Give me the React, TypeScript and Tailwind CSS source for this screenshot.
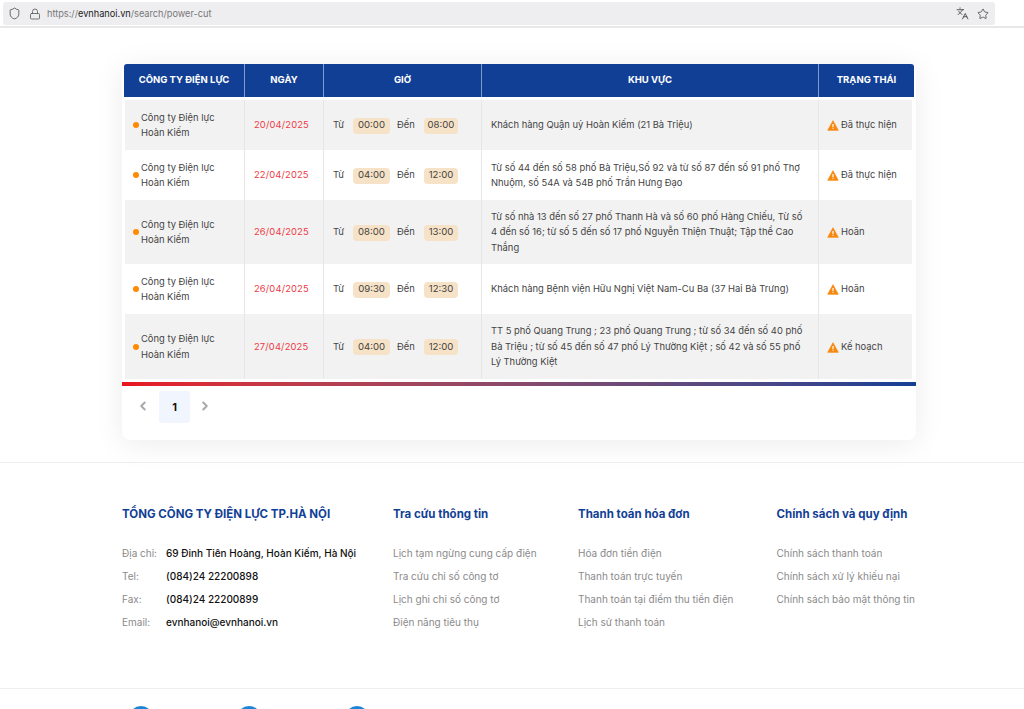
import { ChevronLeft, ChevronRight, Languages, Lock, Shield, Star } from "lucide-react";

const rows = [
  { h: "h-[50px]", date: "20/04/2025", from: "00:00", to: "08:00", area: ["Khách hàng Quận uỷ Hoàn Kiếm (21 Bà Triệu)"], status: "Đã thực hiện" },
  { h: "h-[50px]", date: "22/04/2025", from: "04:00", to: "12:00", area: ["Từ số 44 đến số 58 phố Bà Triệu,Số 92 và từ số 87 đến số 91 phố Thợ", "Nhuộm, số 54A và 54B phố Trần Hưng Đạo"], status: "Đã thực hiện" },
  { h: "h-[64px]", date: "26/04/2025", from: "08:00", to: "13:00", area: ["Từ số nhà 13 đến số 27 phố Thanh Hà và số 60 phố Hàng Chiếu, Từ số", "4 đến số 16; từ số 5 đến số 17 phố Nguyễn Thiện Thuật; Tập thể Cao", "Thắng"], status: "Hoãn" },
  { h: "h-[50px]", date: "26/04/2025", from: "09:30", to: "12:30", area: ["Khách hàng Bệnh viện Hữu Nghị Việt Nam-Cu Ba (37 Hai Bà Trưng)"], status: "Hoãn" },
  { h: "h-[65px]", date: "27/04/2025", from: "04:00", to: "12:00", area: ["TT 5 phố Quang Trung ; 23 phố Quang Trung ; từ số 34 đến số 40 phố", "Bà Triệu ; từ số 45 đến số 47 phố Lý Thường Kiệt ; số 42 và số 55 phố", "Lý Thường Kiệt"], status: "Kế hoạch" },
];

const contact = [
  ["Địa chỉ:", "69 Đinh Tiên Hoàng, Hoàn Kiếm, Hà Nội"],
  ["Tel:", "(084)24 22200898"],
  ["Fax:", "(084)24 22200899"],
  ["Email:", "evnhanoi@evnhanoi.vn"],
];

const columns = [
  { title: "Tra cứu thông tin", width: "w-[185px]", items: ["Lịch tạm ngừng cung cấp điện", "Tra cứu chỉ số công tơ", "Lịch ghi chỉ số công tơ", "Điện năng tiêu thụ"] },
  { title: "Thanh toán hóa đơn", width: "w-[198.5px]", items: ["Hóa đơn tiền điện", "Thanh toán trực tuyến", "Thanh toán tại điểm thu tiền điện", "Lịch sử thanh toán"] },
  { title: "Chính sách và quy định", width: "w-[140px]", items: ["Chính sách thanh toán", "Chính sách xử lý khiếu nại", "Chính sách bảo mật thông tin"] },
];

function Warn() {
  return (
    <svg viewBox="0 0 24 24" className="h-[11px] w-[12px] shrink-0">
      <path d="M12 1.5 23.5 22.5H.5Z" fill="#f7880f" stroke="#f7880f" strokeWidth="1.5" strokeLinejoin="round" />
      <path d="M12 8.5v7.5M12 17.8v2" stroke="#fff" strokeWidth="2.6" />
    </svg>
  );
}

export default function App() {
  return (
    <div className="h-[709px] w-[1024px] overflow-hidden bg-white [font-family:Inter,sans-serif] text-[9.4px] text-[#444]">
      <div className="flex h-[28px] items-start border-b-2 border-[#e8e8e8] bg-white pl-[3px] pt-[2px]">
        <div className="flex h-[23px] w-[992px] items-center rounded-[3px] bg-[#eeeef0] pl-[5px] pr-[6px]">
          <Shield size={13} strokeWidth={1.6} className="text-[#555]" />
          <Lock size={12} strokeWidth={1.6} className="ml-[8px] text-[#555]" />
          <span className="ml-[6px] text-[9.2px] text-[#777]">
            https://<span className="text-[#222]">evnhanoi.vn</span>/search/power-cut
          </span>
          <Languages size={13} strokeWidth={1.6} className="ml-auto text-[#444]" />
          <Star size={12} strokeWidth={1.6} className="ml-[8px] text-[#444]" />
        </div>
      </div>

      <main className="pl-[122px] pt-[36px]">
        <div className="h-[376px] w-[794px] rounded-[8px] bg-white shadow-[0_4px_30px_rgba(0,0,0,0.08)]">
          <div className="px-[2px]">
            <div className="flex h-[33px] rounded-t-[3px] bg-[#123f96] text-[9.5px] font-bold text-white">
              <div className="flex w-[121px] items-center justify-center border-r border-[#7f9bcb]">CÔNG TY ĐIỆN LỰC</div>
              <div className="flex w-[79px] items-center justify-center border-r border-[#7f9bcb]">NGÀY</div>
              <div className="flex w-[158px] items-center justify-center border-r border-[#7f9bcb]">GIỜ</div>
              <div className="flex w-[337px] items-center justify-center border-r border-[#7f9bcb]">KHU VỰC</div>
              <div className="flex flex-1 items-center justify-center">TRẠNG THÁI</div>
            </div>
            <div className="flex flex-col pl-px pr-[2px] pt-[3px]">
              {rows.map((r, i) => (
                <div key={i} className={`flex ${r.h} ${i % 2 === 0 ? "bg-[#f2f2f2]" : "bg-white"}`}>
                  <div className="flex w-[120px] items-center border-r border-[#e6e6e6] pl-[8px]">
                    <span className="mr-[2px] h-[6px] w-[6px] shrink-0 rounded-full bg-[#ff8a00]" />
                    <span className="leading-[15.5px]">Công ty Điện lực<br />Hoàn Kiếm</span>
                  </div>
                  <div className="flex w-[79px] items-center border-r border-[#e6e6e6] pl-[9px] pt-px tracking-[0.15px] text-[#ee3a45]">{r.date}</div>
                  <div className="flex w-[158px] items-center border-r border-[#e6e6e6] pl-[9px] pt-px">
                    <span className="w-[20px]">Từ</span>
                    <span className="flex h-[16px] w-[37px] items-center justify-center rounded-[4px] bg-[#f6e2c6] text-[9.6px]">{r.from}</span>
                    <span className="ml-[7px] w-[27px]">Đến</span>
                    <span className="flex h-[16px] w-[34px] items-center justify-center rounded-[4px] bg-[#f6e2c6] text-[9.6px]">{r.to}</span>
                  </div>
                  <div className="flex w-[337px] items-center border-r border-[#e6e6e6] pl-[9px] leading-[15.5px]">
                    <span>{r.area.map((l, j) => <span key={j} className="block whitespace-nowrap">{l}</span>)}</span>
                  </div>
                  <div className="flex flex-1 items-center gap-[2px] pl-[8px] pt-px">
                    <Warn />
                    <span>{r.status}</span>
                  </div>
                </div>
              ))}
            </div>
          </div>
          <div className="mt-[3px] h-[4px] bg-gradient-to-r from-[#e8141f] to-[#123f96]" />
          <div className="flex items-start pl-[14px] pt-[5px]">
            <ChevronLeft size={14} strokeWidth={3.5} className="mt-[8px] text-[#aaa]" />
            <span className="ml-[9px] flex h-[32px] w-[31px] items-center justify-center rounded-[3px] bg-[#f1f5fd] text-[11px] font-bold text-[#111]">1</span>
            <ChevronRight size={14} strokeWidth={3.5} className="ml-[8px] mt-[8px] text-[#aaa]" />
          </div>
        </div>
      </main>

      <footer className="mt-[22px] border-t border-[#eeeeee]">
        <div className="flex h-[225px] pl-[122px] pt-[43px]">
          <div className="w-[271px]">
            <h3 className="whitespace-nowrap text-[11.5px] font-bold leading-[16px] text-[#123f96]">TỔNG CÔNG TY ĐIỆN LỰC TP.HÀ NỘI</h3>
            <dl className="mt-[23px] flex flex-col gap-[7px] text-[10px] leading-[16px]">
              {contact.map(([k, v]) => (
                <div key={k} className="flex">
                  <dt className="w-[44px] text-[#8a8a8a]">{k}</dt>
                  <dd className="font-medium text-[#111]">{v}</dd>
                </div>
              ))}
            </dl>
          </div>
          {columns.map((c) => (
            <div key={c.title} className={c.width}>
              <h3 className="whitespace-nowrap text-[11.5px] font-bold leading-[16px] text-[#123f96]">{c.title}</h3>
              <ul className="mt-[23px] flex flex-col gap-[7px] text-[10px] leading-[16px] text-[#8a8a8a]">
                {c.items.map((t) => <li key={t} className="whitespace-nowrap">{t}</li>)}
              </ul>
            </div>
          ))}
        </div>
        <div className="flex gap-[84px] border-t border-[#eeeeee] pl-[129px] pt-[17px]">
          <span className="h-[24px] w-[24px] rounded-full bg-[#1b86d8]" />
          <span className="h-[24px] w-[24px] rounded-full bg-[#1b86d8]" />
          <span className="h-[24px] w-[24px] rounded-full bg-[#1b86d8]" />
        </div>
      </footer>
    </div>
  );
}
